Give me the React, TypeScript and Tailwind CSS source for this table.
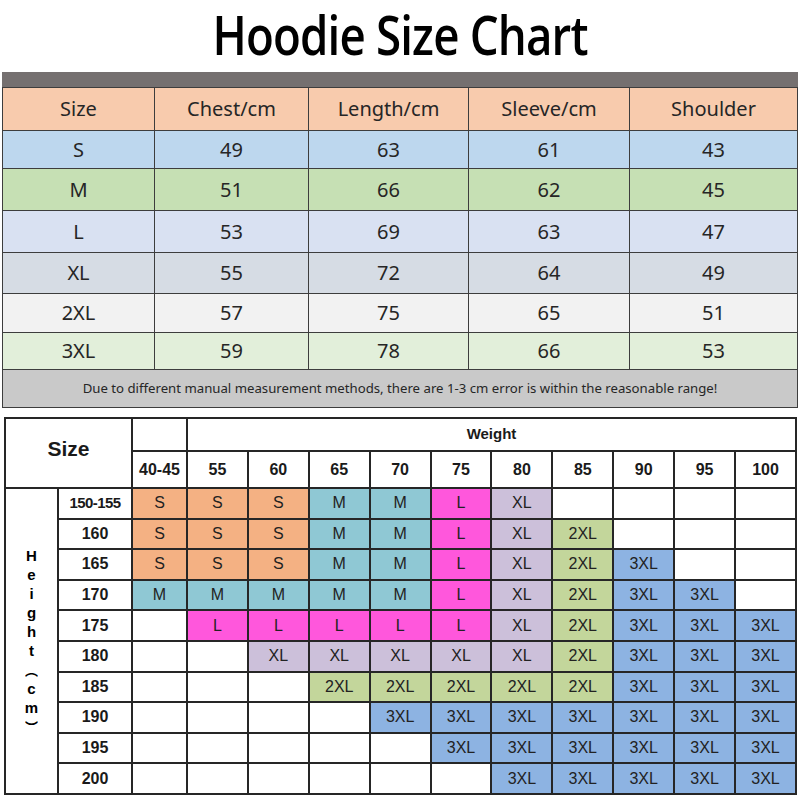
import React from "react";

const measureHead = ["Size", "Chest/cm", "Length/cm", "Sleeve/cm", "Shoulder"];

const measureRows = [
  { cells: ["S", "49", "63", "61", "43"], bg: "bg-[#bdd7ee]", h: "h-[38px]" },
  { cells: ["M", "51", "66", "62", "45"], bg: "bg-[#c6e0b4]", h: "h-[42px]" },
  { cells: ["L", "53", "69", "63", "47"], bg: "bg-[#d9e1f2]", h: "h-[42px]" },
  { cells: ["XL", "55", "72", "64", "49"], bg: "bg-[#d6dce4]", h: "h-[41px]" },
  { cells: ["2XL", "57", "75", "65", "51"], bg: "bg-[#f2f2f2]", h: "h-[39px]" },
  { cells: ["3XL", "59", "78", "66", "53"], bg: "bg-[#e2efda]", h: "h-[37px]" },
];

const weights = ["40-45", "55", "60", "65", "70", "75", "80", "85", "90", "95", "100"];

// one row per height, one letter code per weight column ("" = empty)
const chart: [string, string[]][] = [
  ["150-155", ["S", "S", "S", "M", "M", "L", "XL", "", "", "", ""]],
  ["160", ["S", "S", "S", "M", "M", "L", "XL", "2XL", "", "", ""]],
  ["165", ["S", "S", "S", "M", "M", "L", "XL", "2XL", "3XL", "", ""]],
  ["170", ["M", "M", "M", "M", "M", "L", "XL", "2XL", "3XL", "3XL", ""]],
  ["175", ["", "L", "L", "L", "L", "L", "XL", "2XL", "3XL", "3XL", "3XL"]],
  ["180", ["", "", "XL", "XL", "XL", "XL", "XL", "2XL", "3XL", "3XL", "3XL"]],
  ["185", ["", "", "", "2XL", "2XL", "2XL", "2XL", "2XL", "3XL", "3XL", "3XL"]],
  ["190", ["", "", "", "", "3XL", "3XL", "3XL", "3XL", "3XL", "3XL", "3XL"]],
  ["195", ["", "", "", "", "", "3XL", "3XL", "3XL", "3XL", "3XL", "3XL"]],
  ["200", ["", "", "", "", "", "", "3XL", "3XL", "3XL", "3XL", "3XL"]],
];

const sizeColor: Record<string, string> = {
  S: "bg-[#f4b183]",
  M: "bg-[#8fc8d4]",
  L: "bg-[#ff57dc]",
  XL: "bg-[#ccc0da]",
  "2XL": "bg-[#c3d69b]",
  "3XL": "bg-[#8db3e2]",
  "": "bg-white",
};

const heightLetters = ["H", "e", "i", "g", "h", "t", "︵", "c", "m", "︶"];

const cell1 = "border-[1.5px] border-[#3d3d3d] text-center align-middle p-0";
const cell2 = "border-2 border-[#262626] text-center align-middle p-0";

const App = () => {
  return (
    <div className="w-[800px] h-[800px] bg-white overflow-hidden">
      <div className="h-[72px] flex justify-center">
        <h1 className="pt-[1px] font-['Open_Sans',sans-serif] font-semibold text-[55px] leading-[66px] text-black tracking-[-1px] whitespace-nowrap scale-x-[0.83]">
          Hoodie Size Chart
        </h1>
      </div>

      <div className="ml-[2px] w-[796px] font-['Noto_Sans','Open_Sans',sans-serif] text-[#262626]">
        <div className="h-[15px] bg-[#757070]" />
        <table className="w-full border-collapse table-fixed text-[20px]">
          <colgroup>
            <col className="w-[152px]" />
            <col className="w-[154px]" />
            <col className="w-[160px]" />
            <col className="w-[161px]" />
            <col />
          </colgroup>
          <tbody>
            <tr className="h-[43px] bg-[#f8cbad]">
              {measureHead.map((t) => (
                <td key={t} className={cell1}>{t}</td>
              ))}
            </tr>
            {measureRows.map((r) => (
              <tr key={r.cells[0]} className={`${r.h} ${r.bg}`}>
                {r.cells.map((c, i) => (
                  <td key={i} className={cell1}>{c}</td>
                ))}
              </tr>
            ))}
            <tr className="h-[38px] bg-[#c9c9c9]">
              <td colSpan={5} className={`${cell1} text-[13.2px]`}>
                Due to different manual measurement methods, there are 1-3 cm error is within the reasonable range!
              </td>
            </tr>
          </tbody>
        </table>
      </div>

      <div className="mt-[9px] ml-[4px] w-[793px] font-['Liberation_Sans',Arial,sans-serif] text-[#1a1a1a]">
        <table className="w-full border-collapse table-fixed">
          <colgroup>
            <col className="w-[53px]" />
            <col className="w-[74px]" />
            <col className="w-[55px]" />
            {weights.slice(1).map((w) => (
              <col key={w} />
            ))}
          </colgroup>
          <tbody>
            <tr className="h-[33px]">
              <td rowSpan={2} colSpan={2} className={`${cell2} font-bold text-[21px] pb-[8px]`}>Size</td>
              <td className={cell2} />
              <td colSpan={10} className={`${cell2} font-bold text-[15px]`}>Weight</td>
            </tr>
            <tr className="h-[37px]">
              {weights.map((w) => (
                <td key={w} className={`${cell2} font-bold text-[16px]`}>{w}</td>
              ))}
            </tr>
            {chart.map(([height, sizes], ri) => (
              <tr key={height} className="h-[30.6px]">
                {ri === 0 && (
                  <td rowSpan={10} className={cell2}>
                    <div className="flex flex-col items-center font-bold text-[15px] leading-[19px] text-black">
                      {heightLetters.map((ch, i) => (
                        <span
                          key={i}
                          className={
                            ch === "︵" || ch === "︶"
                              ? "block h-[19px] overflow-hidden font-['Noto_Sans_CJK_SC',sans-serif] text-[13px] leading-[19px]"
                              : "block h-[19px]"
                          }
                        >
                          {ch}
                        </span>
                      ))}
                    </div>
                  </td>
                )}
                <td className={`${cell2} font-bold ${height.length > 3 ? "text-[15px] tracking-[-0.6px]" : "text-[16px]"}`}>
                  {height}
                </td>
                {sizes.map((s, i) => (
                  <td key={i} className={`${cell2} ${sizeColor[s]} text-[16px] text-[#222]`}>
                    {s}
                  </td>
                ))}
              </tr>
            ))}
          </tbody>
        </table>
      </div>
    </div>
  );
};

export default App;
